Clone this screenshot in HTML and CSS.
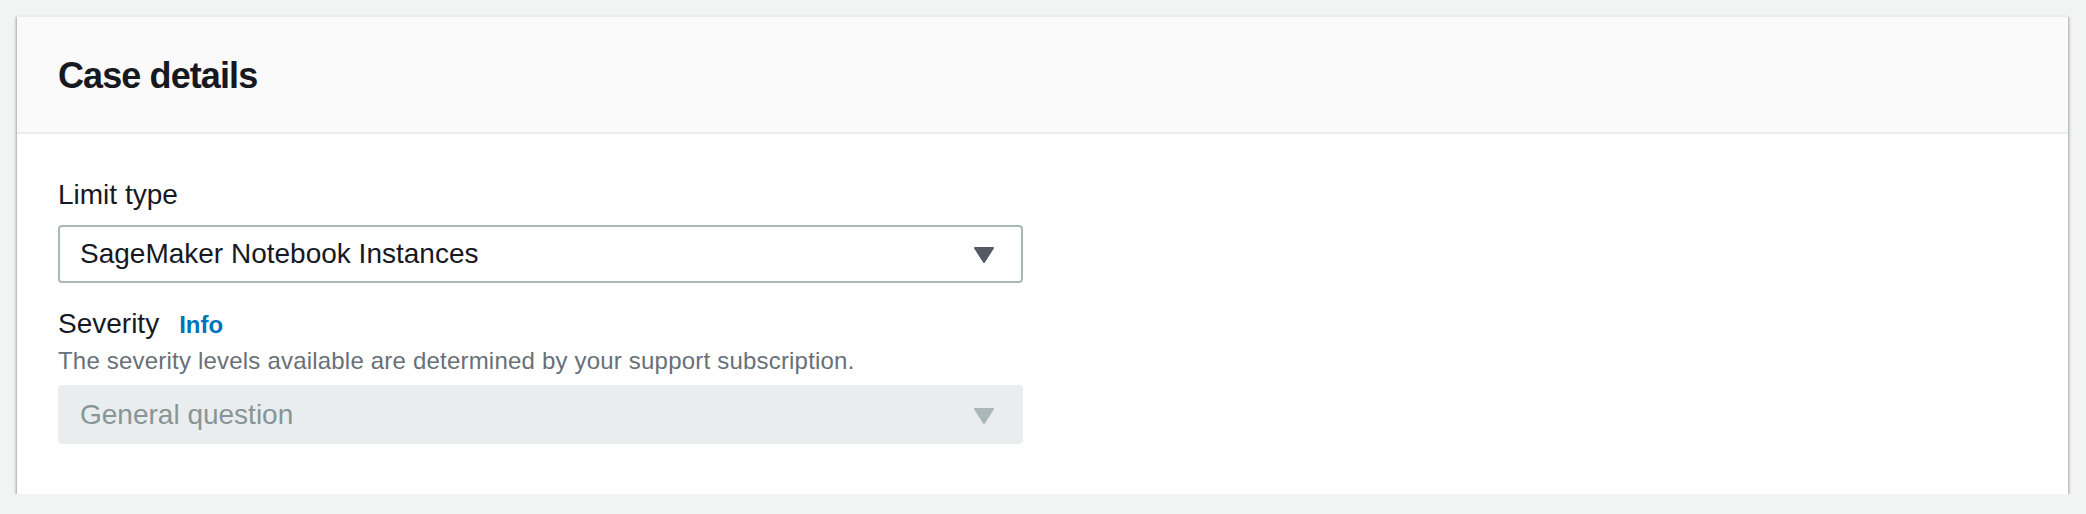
FILE: index.html
```html
<!DOCTYPE html>
<html lang="en">
<head>
<meta charset="utf-8">
<title>Case details</title>
<link rel="stylesheet" href="styles.css">
</head>
<body>
<div class="page">
  <section class="card">
    <header class="card-header">
      <h2 class="card-title">Case details</h2>
    </header>
    <div class="card-body">
      <div class="field">
        <div class="label">Limit type</div>
        <div class="select">
          <span class="select-value">SageMaker Notebook Instances</span>
          <svg class="caret" width="22" height="18" viewBox="0 0 22 18"><path d="M2 2 H20 L11 16 Z" fill="#545b64" stroke="#545b64" stroke-width="2" stroke-linejoin="round"/></svg>
        </div>
      </div>
      <div class="field field-severity">
        <div class="label">Severity <a class="info" href="#">Info</a></div>
        <div class="description">The severity levels available are determined by your support subscription.</div>
        <div class="select select-disabled">
          <span class="select-value">General question</span>
          <svg class="caret" width="22" height="18" viewBox="0 0 22 18"><path d="M2 2 H20 L11 16 Z" fill="#aab7b8" stroke="#aab7b8" stroke-width="2" stroke-linejoin="round"/></svg>
        </div>
      </div>
    </div>
  </section>
</div>
</body>
</html>
```
FILE: styles.css
```css
html, body {
  margin: 0;
  padding: 0;
  background: #f2f3f3;
}

body {
  font-family: "Liberation Sans", Arial, sans-serif;
  color: #16191f;
}

.page {
  padding: 15px 18px 0 17px;
}

.card {
  background: #ffffff;
  border-top: 2px solid #eaeded;
  box-shadow: 0 2px 2px 0 rgba(0, 28, 36, 0.3), 2px 2px 2px 0 rgba(0, 28, 36, 0.15), -2px 2px 2px 0 rgba(0, 28, 36, 0.15);
}

.card-header {
  background: #fafafa;
  border-bottom: 2px solid #eaeded;
  padding: 37px 41px 34px;
}

.card-title {
  margin: 0;
  font-size: 36px;
  line-height: 44px;
  font-weight: 700;
  letter-spacing: -0.9px;
  color: #16191f;
}

.card-body {
  padding: 41px 41px 50px;
}

.label {
  font-size: 28px;
  line-height: 40px;
  color: #16191f;
  display: flex;
  align-items: baseline;
}

.info {
  margin-left: 20px;
  font-size: 24px;
  font-weight: 700;
  color: #0073bb;
  text-decoration: none;
}

.field-severity {
  margin-top: 21px;
}

.description {
  font-size: 24px;
  line-height: 32px;
  letter-spacing: 0.2px;
  color: #687078;
}

.select {
  box-sizing: border-box;
  width: 965px;
  height: 58px;
  margin-top: 10px;
  border: 2px solid #aab7b8;
  border-radius: 4px;
  background: #ffffff;
  display: flex;
  align-items: center;
  justify-content: space-between;
  padding: 0 26px 0 20px;
}

.field-severity .select {
  margin-top: 8px;
}

.select-value {
  font-size: 28px;
  line-height: 54px;
  color: #16191f;
}

.select-disabled {
  height: 59px;
  background: #eaeded;
  border-color: #eaeded;
}

.select-disabled .select-value {
  color: #879596;
}

.caret {
  display: block;
  margin-top: 2px;
}
```
